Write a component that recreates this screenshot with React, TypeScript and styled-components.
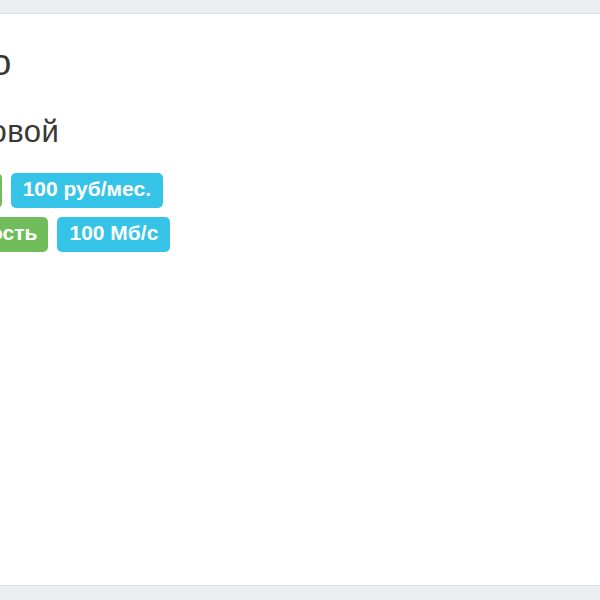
import React from "react";
import styled, { createGlobalStyle } from "styled-components";

const Global = createGlobalStyle`
  html, body {
    margin: 0;
    padding: 0;
    background: #eceef1;
    overflow: hidden;
  }
  body {
    font-family: "Liberation Sans", Arial, sans-serif;
  }
`;

const Panel = styled.section`
  margin: 13px -1px 0;
  height: 573px;
  box-sizing: border-box;
  background: #ffffff;
  border: 1px solid #dcdfe3;
  padding-top: 29px;
  overflow: hidden;
`;

const Column = styled.div`
  margin-left: -72px;
  display: flex;
  flex-direction: column;
  align-items: flex-start;
`;

const Title = styled.h3`
  margin: 0;
  font-size: 37px;
  line-height: 1.1;
  font-weight: 400;
  color: #383838;
`;

const Subtitle = styled.h4`
  margin: 31px 0 0;
  font-size: 31px;
  letter-spacing: 0.5px;
  line-height: 1.1;
  font-weight: 400;
  color: #383838;
`;

const Rows = styled.div`
  margin-top: 24px;
  display: flex;
  flex-direction: column;
  gap: 9px;
`;

const Row = styled.div`
  display: flex;
  gap: 9px;
`;

const Label = styled.span<{ $tone: "success" | "info" }>`
  display: inline-block;
  font-size: 21px;
  line-height: 1;
  font-weight: 700;
  color: #ffffff;
  padding: 5px ${(p) => (p.$tone === "info" ? "12px" : "11px")} 9px;
  border-radius: 5px;
  white-space: nowrap;
  background: ${(p) => (p.$tone === "success" ? "#72bd5b" : "#35c4e7")};
`;

const rows = [
  { name: "Цена", value: "100 руб/мес." },
  { name: "Скорость", value: "100 Мб/с" },
];

export default function App() {
  return (
    <>
      <Global />
      <Panel>
        <Column>
          <Title>Кино</Title>
          <Subtitle>Домовой</Subtitle>
          <Rows>
            {rows.map((r) => (
              <Row key={r.name}>
                <Label $tone="success">{r.name}</Label>
                <Label $tone="info">{r.value}</Label>
              </Row>
            ))}
          </Rows>
        </Column>
      </Panel>
    </>
  );
}
